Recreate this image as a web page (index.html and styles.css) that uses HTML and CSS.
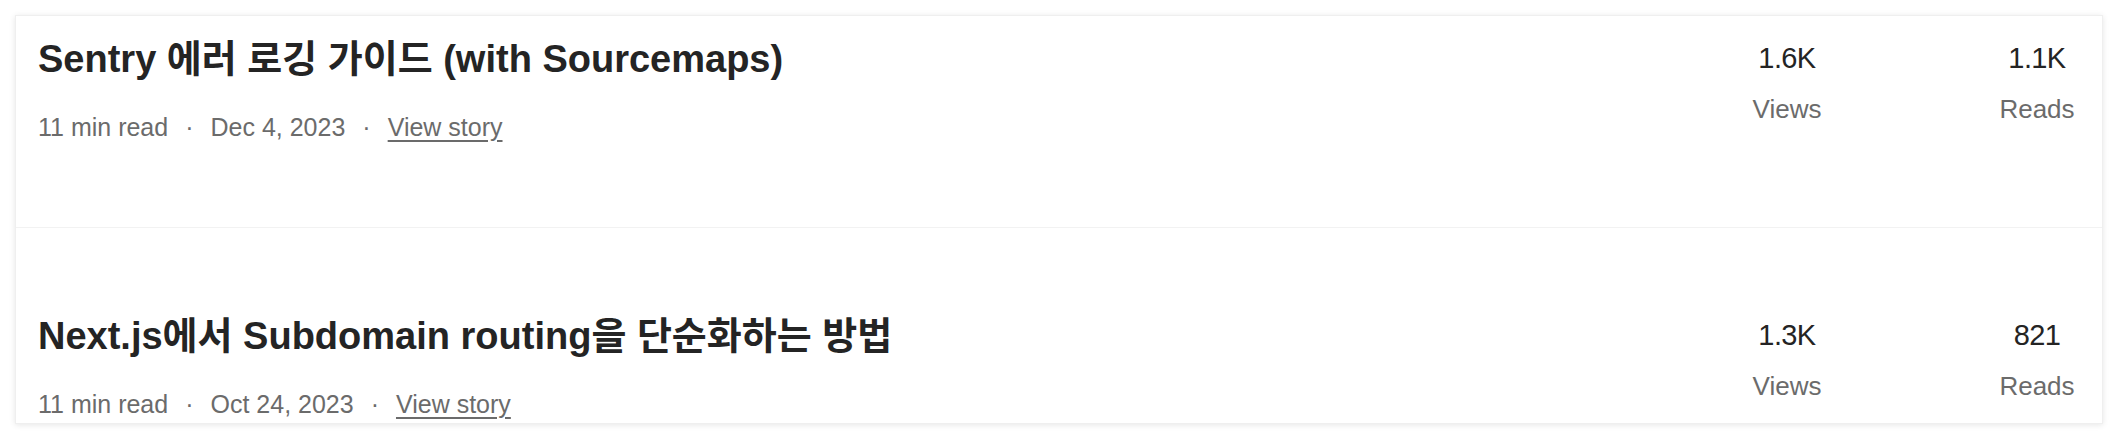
FILE: index.html
```html
<!DOCTYPE html>
<html>
<head>
    <meta charset="utf-8">
    <title>Story stats</title>
    <meta name="viewport" content="width=device-width, initial-scale=1.0">
    <link rel="stylesheet" href="styles.css">
</head>
<body>
    <div class="card">
        <div class="row first">
            <div class="story">
                <h2 class="title">Sentry 에러 로깅 가이드 (with Sourcemaps)</h2>
                <div class="meta">
                    <span>11 min read</span><span class="dot">·</span><span>Dec 4, 2023</span><span class="dot">·</span><a href="#" class="link">View story</a>
                </div>
            </div>
            <div class="stat">
                <div class="num">1.6K</div>
                <div class="label">Views</div>
            </div>
            <div class="stat last">
                <div class="num">1.1K</div>
                <div class="label">Reads</div>
            </div>
        </div>
        <div class="row second">
            <div class="story">
                <h2 class="title">Next.js에서 Subdomain routing을 단순화하는 방법</h2>
                <div class="meta">
                    <span>11 min read</span><span class="dot">·</span><span>Oct 24, 2023</span><span class="dot">·</span><a href="#" class="link">View story</a>
                </div>
            </div>
            <div class="stat">
                <div class="num">1.3K</div>
                <div class="label">Views</div>
            </div>
            <div class="stat last">
                <div class="num">821</div>
                <div class="label">Reads</div>
            </div>
        </div>
    </div>
</body>
</html>
```

FILE: styles.css
```css
body {
    margin: 0;
    padding: 15px;
    background: #fff;
    font-family: "Liberation Sans", "Noto Sans CJK KR", sans-serif;
    color: #242424;
}
.card {
    border: 1px solid #efefef;
    box-shadow: 0 1px 6px rgba(0, 0, 0, 0.1);
    background: #fff;
}
.row {
    display: flex;
    align-items: flex-start;
    padding-left: 22px;
    padding-right: 15px;
}
.row.first {
    padding-top: 20px;
    padding-bottom: 82px;
    border-bottom: 1px solid #f2f2f2;
}
.row.second {
    padding-top: 85px;
    padding-bottom: 1px;
}
.story {
    flex: 1;
}
.title {
    margin: 0;
    font-size: 38px;
    line-height: 46px;
    font-weight: 700;
    color: #242424;
}
.meta {
    margin-top: 27px;
    font-size: 25px;
    line-height: 36px;
    color: #6b6b6b;
}
.dot {
    padding: 0 17px;
}
.link {
    color: #6b6b6b;
    text-decoration: underline;
    text-underline-offset: 4px;
}
.stat {
    width: 100px;
    padding-top: 4px;
    text-align: center;
}
.stat.last {
    margin-left: 150px;
}
.num {
    font-size: 29px;
    line-height: 36px;
    color: #242424;
    letter-spacing: -0.6px;
}
.label {
    margin-top: 15px;
    font-size: 26px;
    line-height: 36px;
    color: #6b6b6b;
}
```
